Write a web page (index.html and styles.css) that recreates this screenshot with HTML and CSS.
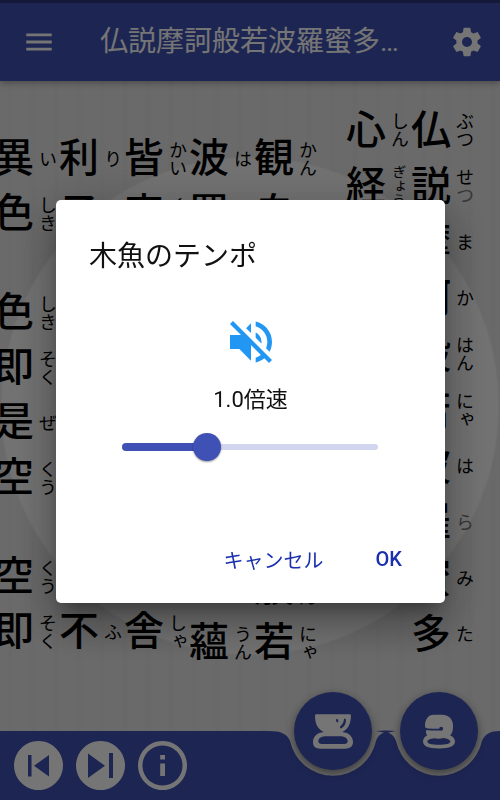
FILE: index.html
```html
<!DOCTYPE html>
<html lang="ja">
<head>
<meta charset="utf-8">
<meta name="viewport" content="width=device-width, initial-scale=1">
<title>仏説摩訶般若波羅蜜多心経</title>
<link rel="stylesheet" href="styles.css">
</head>
<body>
<div class="app">
  <header class="appbar">
    <button class="icon-button" type="button" aria-label="メニュー">
      <svg class="icon" viewBox="0 0 24 24"><path d="M3 18h18v-2H3v2zm0-5h18v-2H3v2zm0-7v2h18V6H3z"/></svg>
    </button>
    <h1 class="appbar-title">仏説摩訶般若波羅蜜多…</h1>
    <button class="icon-button" type="button" aria-label="設定">
      <svg class="icon" viewBox="0 0 24 24"><path d="M19.43 12.98c.04-.32.07-.64.07-.98s-.03-.66-.07-.98l2.11-1.65c.19-.15.24-.42.12-.64l-2-3.46c-.12-.22-.39-.3-.61-.22l-2.49 1c-.52-.4-1.08-.73-1.69-.98l-.38-2.65C14.46 2.18 14.25 2 14 2h-4c-.25 0-.46.18-.49.42l-.38 2.65c-.61.25-1.17.59-1.69.98l-2.49-1c-.23-.09-.49 0-.61.22l-2 3.46c-.13.22-.07.49.12.64l2.11 1.65c-.04.32-.07.65-.07.98s.03.66.07.98l-2.11 1.65c-.19.15-.24.42-.12.64l2 3.46c.12.22.39.3.61.22l2.49-1c.52.4 1.08.73 1.69.98l.38 2.65c.03.24.24.42.49.42h4c.25 0 .46-.18.49-.42l.38-2.65c.61-.25 1.17-.59 1.69-.98l2.49 1c.23.09.49 0 .61-.22l2-3.46c.12-.22.07-.49-.12-.64l-2.11-1.65zM12 15.5c-1.93 0-3.5-1.57-3.5-3.5s1.57-3.5 3.5-3.5 3.5 1.57 3.5 3.5-1.57 3.5-3.5 3.5z"/></svg>
    </button>
  </header>

  <main class="sutra">
    <div class="column column-title">
      <span class="cell"><b>仏</b><i>ぶつ</i></span>
      <span class="cell"><b>説</b><i>せ<em>つ</em></i></span>
      <span class="cell"><b>摩</b><i>ま</i></span>
      <span class="cell"><b>訶</b><i>か</i></span>
      <span class="cell"><b>般</b><i>はん</i></span>
      <span class="cell"><b>若</b><i>にゃ</i></span>
      <span class="cell"><b>波</b><i>は</i></span>
      <span class="cell"><b>羅</b><i><em>ら</em></i></span>
      <span class="cell"><b>蜜</b><i>み</i></span>
      <span class="cell"><b>多</b><i>た</i></span>
    </div>
    <div class="column column-title">
      <span class="cell"><b>心</b><i>しん</i></span>
      <span class="cell"><b>経</b><i class="tight">ぎょう</i></span>
    </div>
    <div class="column column-first">
      <span class="cell"><b>観</b><i>かん</i></span>
      <span class="cell"><b>自</b><i>じ</i></span>
      <span class="cell"><b>在</b><i>ざい</i></span>
      <span class="cell"><b>菩</b><i>ぼ</i></span>
      <span class="cell"><b>薩</b><i>さつ</i></span>
      <span class="cell pause"><b>行</b><i class="tight">ぎょう</i></span>
      <span class="cell"><b>深</b><i>じん</i></span>
      <span class="cell"><b>般</b><i>はん</i></span>
      <span class="cell"><b>若</b><i>にゃ</i></span>
    </div>
    <div class="column">
      <span class="cell"><b>波</b><i>は</i></span>
      <span class="cell"><b>羅</b><i>ら</i></span>
      <span class="cell"><b>蜜</b><i>みっ</i></span>
      <span class="cell"><b>多</b><i>た</i></span>
      <span class="cell"><b>時</b><i>じ</i></span>
      <span class="cell pause"><b>照</b><i class="tight">しょう</i></span>
      <span class="cell"><b>見</b><i>けん</i></span>
      <span class="cell"><b>五</b><i>ご</i></span>
      <span class="cell"><b>蘊</b><i>うん</i></span>
    </div>
    <div class="column">
      <span class="cell"><b>皆</b><i>かい</i></span>
      <span class="cell"><b>空</b><i>くう</i></span>
      <span class="cell pause"><b>度</b><i>ど</i></span>
      <span class="cell"><b>一</b><i>いっ</i></span>
      <span class="cell"><b>切</b><i>さい</i></span>
      <span class="cell"><b>苦</b><i>く</i></span>
      <span class="cell"><b>厄</b><i>やく</i></span>
      <span class="cell pause"><b>舎</b><i>しゃ</i></span>
    </div>
    <div class="column">
      <span class="cell"><b>利</b><i>り</i></span>
      <span class="cell"><b>子</b><i>し</i></span>
      <span class="cell pause"><b>色</b><i>しき</i></span>
      <span class="cell"><b>不</b><i>ふ</i></span>
      <span class="cell"><b>異</b><i>い</i></span>
      <span class="cell"><b>空</b><i>くう</i></span>
      <span class="cell pause"><b>空</b><i>くう</i></span>
      <span class="cell"><b>不</b><i>ふ</i></span>
    </div>
    <div class="column">
      <span class="cell"><b>異</b><i>い</i></span>
      <span class="cell"><b>色</b><i>しき</i></span>
      <span class="cell pause"><b>色</b><i>しき</i></span>
      <span class="cell"><b>即</b><i>そく</i></span>
      <span class="cell"><b>是</b><i>ぜ</i></span>
      <span class="cell"><b>空</b><i>くう</i></span>
      <span class="cell pause"><b>空</b><i>くう</i></span>
      <span class="cell"><b>即</b><i>そく</i></span>
    </div>
  </main>

  <footer class="bottombar">
    <div class="controls">
      <button class="round-button" type="button" aria-label="前へ">
        <svg viewBox="0 0 49 49"><path fill-rule="evenodd" d="M24.500 0a24.500 24.500 0 1 0 .01 0zM14 14h3.500v21.500H14zM35 14v21.500L20 24.800z"/></svg>
      </button>
      <button class="round-button" type="button" aria-label="次へ">
        <svg viewBox="0 0 49 49"><path fill-rule="evenodd" d="M24.500 0a24.500 24.500 0 1 0 .01 0zM12 12.500v24.500L29 24.800zM33 12h4v25h-4z"/></svg>
      </button>
      <button class="round-button" type="button" aria-label="情報">
        <svg viewBox="0 0 49 49"><path fill-rule="evenodd" d="M24.500 0a24.500 24.500 0 1 0 .01 0zM24.500 4.500a20 20 0 1 1-.01 0zM22.200 14h4.800v4.500h-4.800zM22.200 22.500h4.800V35h-4.800z"/></svg>
      </button>
    </div>
    <div class="dock">
      <svg class="dock-shape" viewBox="0 0 260 69"><path d="M0 0H28C42 0 47 3 50 10A44 44 0 0 0 136 10C138 4 142 2 146 1C150 2 154 4 156 10A44 44 0 0 0 242 10C245 3 250 0 260 0V69H0ZM136 0Q146 -1 156 0L146 2Z"/></svg>
      <div class="fabs">
        <button class="fab" type="button" aria-label="おりん">
          <svg width="40" height="35" viewBox="0 0 120 105">
            <path class="ink" fill-rule="evenodd" d="M6 5Q6 1 10 1H110Q114 1 114 5C113 30 106 44 88 54C108 56 120 68 120 84C120 98 110 104 96 104H22C8 104 0 98 0 84C0 68 12 56 32 54C14 44 6 30 6 5ZM36 67C24 68 16 74 16 81Q16 90 26 90H94Q104 90 104 81C104 74 96 68 84 67Z"/>
            <path class="cut" d="M70 15Q77 14 76 22Q75 27 71 24Q67 19 70 15ZM93 16Q95 12 98 15C101 25 95 38 85 43Q80 44 81 38C88 32 92 26 93 16Z"/>
          </svg>
        </button>
        <button class="fab" type="button" aria-label="木魚">
          <svg width="32" height="35" viewBox="0 0 97 105">
            <path class="ink" fill-rule="evenodd" d="M32 2H58C80 2 91 18 91 35C91 50 88 60 82 64C92 69 97 75 97 83C97 97 80 104 48 104S0 97 0 83C0 74 6 67 13 64Q9 62 9 54Q9 48 12 46Q6 43 6 36C6 16 16 2 32 2ZM34 73C20 74 13 78 13 83C13 89 25 93 48 93S83 89 83 83C83 78 76 74 62 72Q48 76 34 73Z"/>
            <path class="line" d="M4 43Q14 47 28 47H52"/>
            <circle class="cut" cx="55" cy="44" r="6"/>
          </svg>
        </button>
      </div>
    </div>
  </footer>
</div>

<div class="scrim">
  <section class="dialog" role="dialog" aria-modal="true" aria-labelledby="dialog-title">
    <h2 class="dialog-title" id="dialog-title">木魚のテンポ</h2>
    <svg class="volume" viewBox="0 0 24 24"><path d="M16.500 12c0-1.770-1.020-3.290-2.500-4.030v2.210l2.450 2.450c.03-.2.05-.41.05-.63zm2.500 0c0 .94-.2 1.820-.54 2.640l1.510 1.510C20.630 14.910 21 13.500 21 12c0-4.280-2.990-7.860-7-8.770v2.060c2.890.86 5 3.540 5 6.710zM4.270 3L3 4.270 7.730 9H3v6h4l5 5v-6.730l4.250 4.250c-.67.52-1.420.93-2.250 1.180v2.060c1.380-.31 2.630-.95 3.690-1.810L19.730 21 21 19.730l-9-9L4.270 3zM12 4L9.910 6.090 12 8.180V4z"/></svg>
    <label class="speed" for="tempo">1.0倍速</label>
    <div class="slider">
      <input id="tempo" type="range" min="0.5" max="2" step="0.1" value="1">
    </div>
    <div class="actions">
      <button class="text-button" type="button">キャンセル</button>
      <button class="text-button text-button-strong" type="button">OK</button>
    </div>
  </section>
</div>
</body>
</html>
```
FILE: styles.css
```css
:root {
  --primary: #3f51b5;
  --paper: #e6e6e6;
  --action: #1a30ad;
}

* {
  box-sizing: border-box;
}

body {
  margin: 0;
  font-family: Roboto, "Noto Sans CJK JP", sans-serif;
  color: #111;
}

button {
  border: 0;
  padding: 0;
  background: none;
  font: inherit;
  color: inherit;
}

svg {
  display: block;
}

.app {
  display: flex;
  flex-direction: column;
  height: 100vh;
  min-height: 740px;
  overflow: hidden;
  background: var(--paper);
}

/* App bar */
.appbar {
  display: flex;
  align-items: center;
  height: 81px;
  padding: 0 16px 0 22px;
  border-top: 3px solid #2c387e;
  background: var(--primary);
  color: #fff;
  box-shadow: 0 2px 6px rgba(0, 0, 0, 0.3);
  z-index: 1;
}

.icon {
  width: 34px;
  height: 34px;
  fill: currentColor;
}

.appbar-title {
  flex: 1;
  margin: 0 44px;
  overflow: hidden;
  white-space: nowrap;
  font-size: 28px;
  font-weight: 400;
  line-height: 40px;
}

/* Sutra text, columns run right to left */
.sutra {
  flex: 1;
  display: flex;
  flex-direction: row-reverse;
  min-height: 0;
  padding: 21px 26px 0 0;
  overflow: hidden;
  background:
    radial-gradient(circle closest-side at center, #f9f9f9 0 99%, transparent 100%),
    repeating-linear-gradient(90deg, transparent 0 7px, rgba(0, 0, 0, 0.01) 9px 11px, transparent 14px 23px),
    var(--paper);
  color: #000;
}

.column {
  flex: none;
  display: flex;
  flex-direction: column;
  width: 65px;
  padding-top: 29px;
}

.column-title {
  padding-top: 0;
}

.column-first {
  margin-right: 27px;
}

.cell {
  display: flex;
  align-items: center;
  height: 55px;
}

.column-title .cell {
  height: 56px;
}

.pause {
  margin-top: 44px;
}

.cell b {
  width: 44px;
  font-size: 40px;
  font-weight: 500;
  line-height: 55px;
  text-align: center;
}

.cell i {
  width: 20px;
  font-size: 18px;
  font-style: normal;
  line-height: 20px;
  writing-mode: vertical-rl;
}

.cell em {
  font-style: normal;
  color: #777;
}

.cell .tight {
  font-size: 14px;
}

/* Bottom bar */
.bottombar {
  display: flex;
  height: 69px;
}

.controls {
  flex: 1;
  display: flex;
  gap: 13px;
  padding: 10px 0 0 14px;
  background: var(--primary);
}

.round-button {
  width: 49px;
  height: 49px;
}

.round-button svg {
  fill: #fff;
}

.dock {
  position: relative;
  flex: none;
  width: 260px;
}

.dock-shape {
  width: 260px;
  height: 69px;
  fill: var(--primary);
  overflow: visible;
}

.fabs {
  position: absolute;
  top: -39px;
  right: 22px;
  display: flex;
  gap: 28px;
}

.fab {
  display: grid;
  place-items: center;
  width: 78px;
  height: 78px;
  border-radius: 50%;
  background: var(--primary);
  box-shadow: 0 3px 8px rgba(0, 0, 0, 0.45);
}

.ink {
  fill: #fff;
}

.cut {
  fill: var(--primary);
}

.line {
  fill: none;
  stroke: var(--primary);
  stroke-width: 5;
}

/* Dialog */
.scrim {
  position: fixed;
  inset: 0;
  z-index: 2;
  display: flex;
  align-items: center;
  justify-content: center;
  padding: 3px 55px 0 56px;
  background: rgba(0, 0, 0, 0.54);
}

.dialog {
  display: flex;
  flex-direction: column;
  width: 100%;
  max-width: 560px;
  padding: 37px 0 22px;
  border-radius: 5px;
  background: #fff;
  box-shadow: 0 11px 15px -7px rgba(0, 0, 0, 0.3), 0 24px 38px 3px rgba(0, 0, 0, 0.2), 0 9px 46px 8px rgba(0, 0, 0, 0.16);
}

.dialog-title {
  margin: 0 33px;
  font-size: 28px;
  font-weight: 400;
  line-height: 40px;
}

.volume {
  align-self: center;
  width: 56px;
  height: 56px;
  margin-top: 37px;
  fill: #2196f3;
}

.speed {
  margin-top: 15px;
  font-size: 22px;
  line-height: 30px;
  text-align: center;
}

.slider {
  display: grid;
  align-items: center;
  height: 28px;
  margin: 18px 67px 0 66px;
}

.slider::before,
.slider::after,
.slider input {
  grid-area: 1 / 1;
}

.slider::before,
.slider::after {
  content: "";
  border-radius: 4px;
}

.slider::before {
  height: 6px;
  background: #d1d5ed;
}

.slider::after {
  width: 33%;
  height: 8px;
  background: var(--primary);
}

.slider input {
  z-index: 1;
  height: 28px;
  margin: 0 -14px;
  appearance: none;
  background: none;
}

.slider input::-webkit-slider-thumb {
  appearance: none;
  width: 28px;
  height: 28px;
  border-radius: 50%;
  background: var(--primary);
  box-shadow: 0 1px 2px rgba(0, 0, 0, 0.4);
}

.actions {
  display: flex;
  justify-content: flex-end;
  gap: 20px;
  margin-top: 76px;
  padding-right: 27px;
}

.text-button {
  height: 44px;
  padding: 0 16px;
  font-size: 20px;
  font-weight: 400;
  color: var(--action);
}

.text-button-strong {
  font-weight: 500;
}
```
